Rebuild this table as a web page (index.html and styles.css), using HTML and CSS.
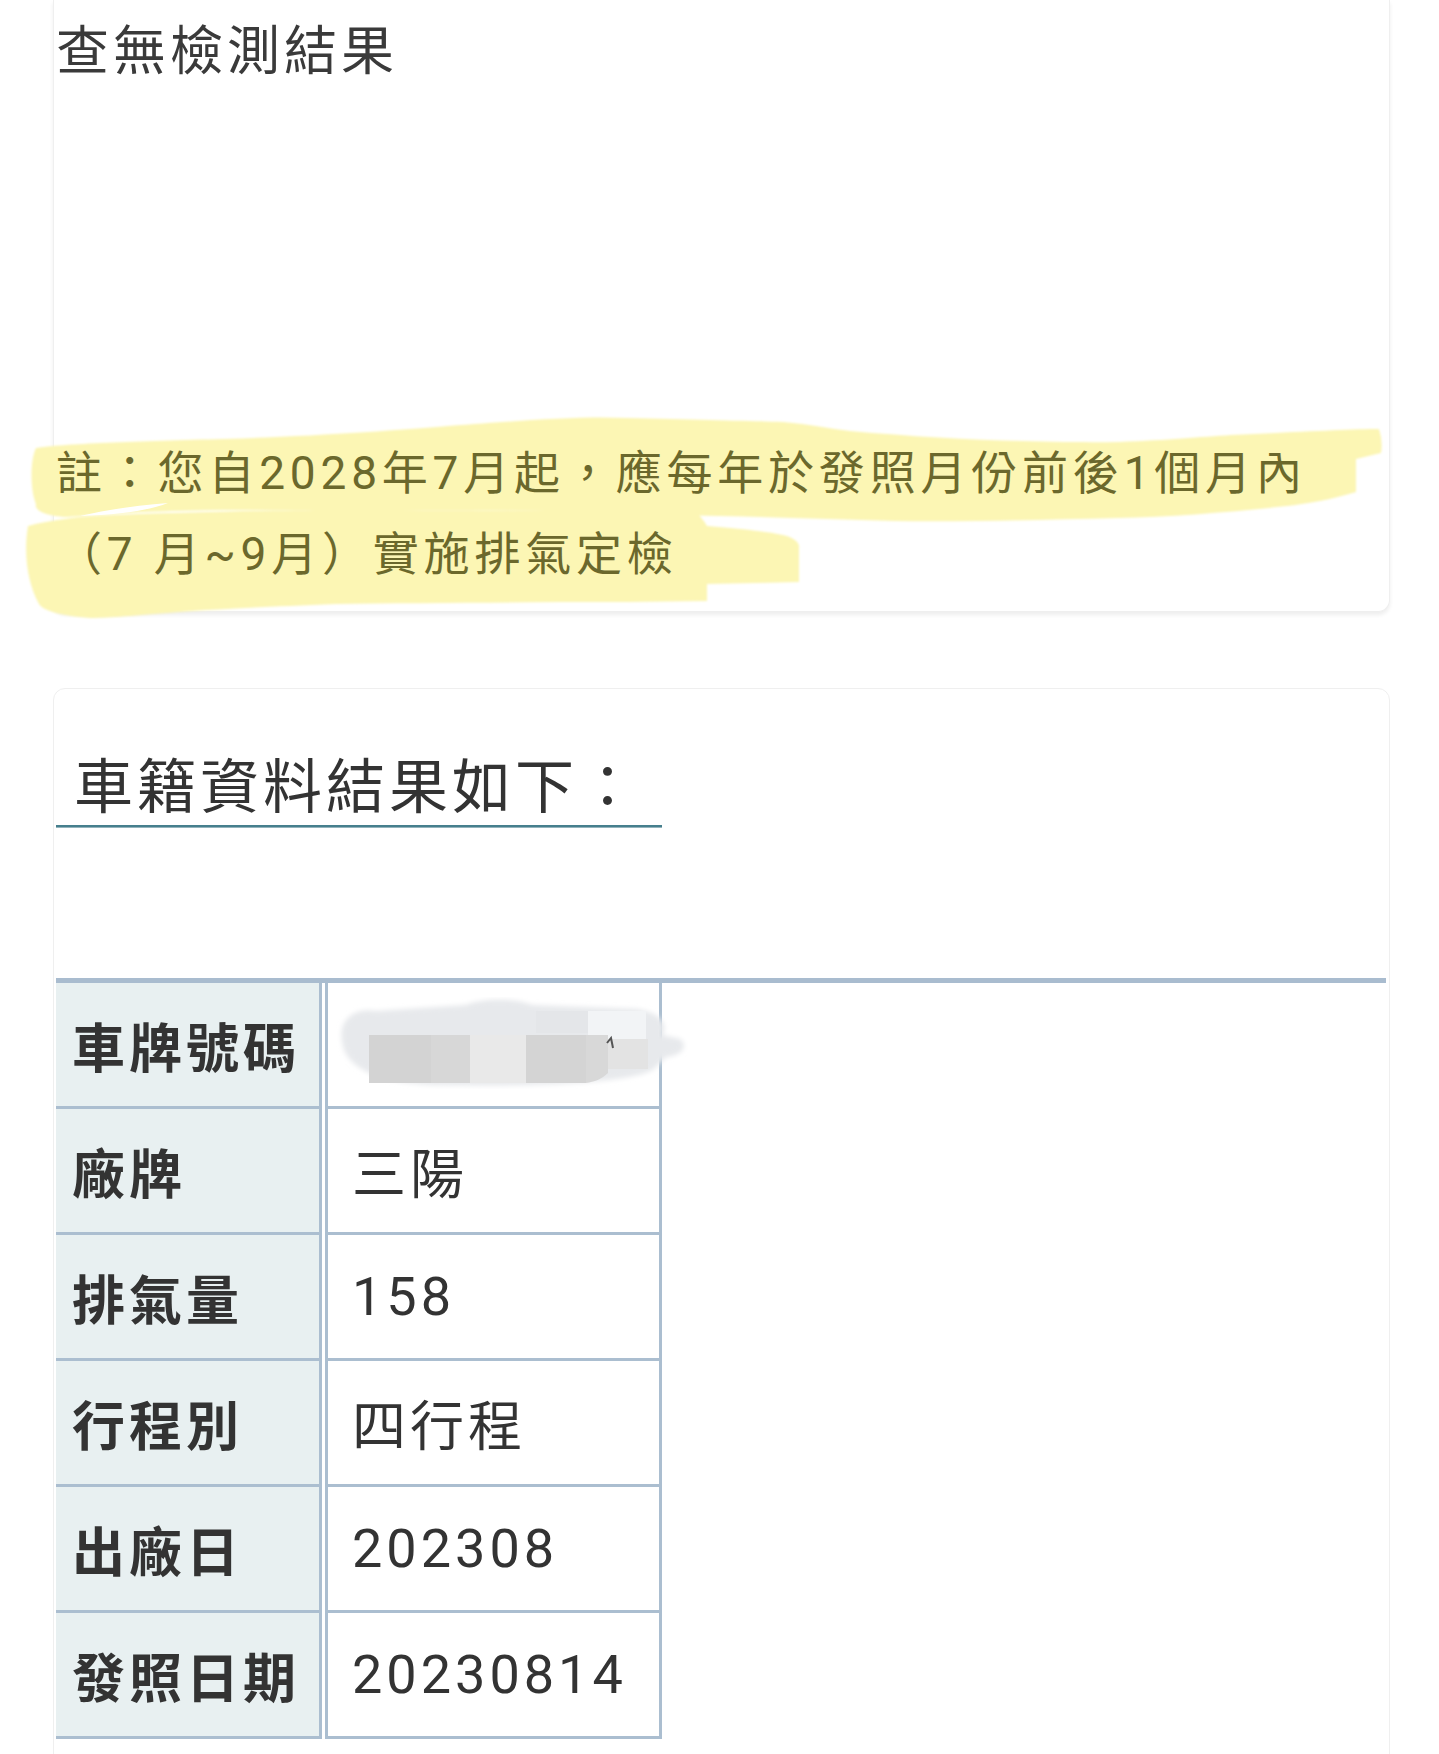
FILE: index.html
```html
<!DOCTYPE html>
<html lang="zh-Hant">
<head>
  <meta charset="UTF-8">
  <meta name="viewport" content="width=device-width, initial-scale=1.0">
  <title>排氣定檢查詢結果</title>
  <link rel="stylesheet" href="styles.css">
</head>
<body>
  <div class="page">

    <section class="card card-result">
      <!-- highlighter stroke drawn over the note -->
      <svg class="marker" width="1400" height="240" viewBox="0 400 1400 240" aria-hidden="true">
        <defs>
          <filter id="soft" x="-5%" y="-20%" width="110%" height="140%">
            <feGaussianBlur stdDeviation="1.2"/>
          </filter>
        </defs>
        <g fill="#fcf6b4" filter="url(#soft)">
          <path d="M36 448 C60 444 140 441 224 439 C320 436 400 430 448 426 C530 420 580 416 627 418 C700 420 760 421 783 422 C810 424 830 429 850 431 C950 440 1050 443 1119 442 C1170 440 1200 437 1231 435 C1300 432 1350 429 1379 429 Q1383 441 1381 453 L1356 459 L1356 492 C1330 500 1305 504 1287 506 C1230 512 1170 517 1119 518 C1040 520 960 522 895 521 C820 519 740 516 671 515 C600 512 520 510 448 510 L224 510 C150 511 100 514 67 517 C45 516 34 510 36 504 C30 490 30 460 36 448 Z"/>
          <path d="M28 526 C50 520 80 516 112 515 C200 512 280 510 336 510 C450 510 600 511 694 511 C700 515 704 521 707 526 C740 529 765 531 783 535 C795 538 800 543 799 548 L799 582 L707 584 L707 601 C650 602 600 602 560 602 C480 603 400 603 336 604 C260 607 200 610 168 613 C130 616 105 618 90 618 C60 616 42 610 39 604 C26 580 24 550 28 526 Z"/>
        </g>
        <path fill="#ffffff" d="M80 516 C110 509 140 505 168 503 C150 510 120 515 80 516 Z"/>
      </svg>

      <p class="empty-msg">查無檢測結果</p>
      <p class="note">註：您自2028年7月起，應每年於發照月份前後1個月內（7 月~9月）實施排氣定檢</p>
    </section>

    <section class="card card-info">
      <h2 class="section-title">車籍資料結果如下：</h2>

      <div class="info-box">
        <table class="info-table">
          <tr>
            <th>車牌號碼</th>
            <td class="plate">
              <!-- redacted plate number -->
              <svg class="plate-blur" width="352" height="92" viewBox="0 0 352 92" aria-hidden="true">
                <defs>
                  <filter id="smudge" x="-10%" y="-20%" width="120%" height="140%">
                    <feGaussianBlur stdDeviation="2.5"/>
                  </filter>
                </defs>
                <path filter="url(#smudge)" fill="#e7e9ec" d="M6 44 C2 22 20 10 40 14 L130 8 C142 2 178 0 196 8 L300 12 C328 16 332 30 326 38 L344 42 C352 48 348 58 330 60 L318 72 C298 86 200 90 100 88 C40 86 8 70 6 44 Z"/>
                <rect x="200" y="14" width="52" height="22" fill="#e4e6e9"/>
                <rect x="252" y="14" width="58" height="28" fill="#f2f4f6"/>
                <rect x="33" y="38" width="62" height="48" fill="#d3d3d3"/>
                <rect x="95" y="38" width="39" height="48" fill="#d7d7d7"/>
                <rect x="134" y="38" width="56" height="48" fill="#e9e9e9"/>
                <rect x="190" y="38" width="60" height="48" fill="#d4d4d4"/>
                <path d="M250 38 H272 V76 C266 82 258 85 250 86 Z" fill="#d8d8d8"/>
                <rect x="272" y="42" width="40" height="30" fill="#e3e3e3"/>
                <path d="M271 46 L275 41 L277 51" fill="none" stroke="#555" stroke-width="2"/>
              </svg>
            </td>
          </tr>
          <tr>
            <th>廠牌</th>
            <td>三陽</td>
          </tr>
          <tr>
            <th>排氣量</th>
            <td>158</td>
          </tr>
          <tr>
            <th>行程別</th>
            <td>四行程</td>
          </tr>
          <tr>
            <th>出廠日</th>
            <td>202308</td>
          </tr>
          <tr>
            <th>發照日期</th>
            <td>20230814</td>
          </tr>
        </table>
      </div>
    </section>

  </div>
</body>
</html>
```

FILE: styles.css
```css
body {
  margin: 0;
  background: #ffffff;
  font-family: Roboto, "Noto Sans CJK TC", sans-serif;
  color: #333333;
}
.page {
  padding: 0 49px 0 53px;
}
.card {
  position: relative;
  background: #ffffff;
  border: 1px solid #efefef;
}
.card-result {
  border-top: none;
  border-radius: 0 0 12px 12px;
  box-shadow: 0 3px 4px rgba(0,0,0,0.07);
  padding: 16px 60px 16px 2px;
  margin-bottom: 76px;
}
.marker {
  position: absolute;
  left: -54px;
  top: 400px;
  z-index: 0;
  pointer-events: none;
}
.empty-msg {
  position: relative;
  z-index: 1;
  margin: 0;
  font-size: 53px;
  line-height: 72px;
  letter-spacing: 4px;
  color: #3a3a3a;
}
.note {
  position: relative;
  z-index: 1;
  margin: 345px 0 0;
  font-size: 46px;
  line-height: 81px;
  letter-spacing: 4.8px;
  color: #6b682c;
}
.card-info {
  border-radius: 12px 12px 0 0;
  padding: 62px 3px 40px 2px;
}
.section-title {
  width: 606px;
  box-sizing: border-box;
  margin: 0 0 151px;
  padding-left: 18px;
  font-size: 59px;
  line-height: 74px;
  font-weight: 400;
  letter-spacing: 4px;
  color: #333333;
  border-bottom: 2px solid #467f8d;
  box-shadow: 0 1px 0 #93b3bb;
}
.info-box {
  border-top: 5px solid #a9bccf;
}
.info-table {
  border-collapse: separate;
  border-spacing: 3px 0;
  margin-left: -3px;
}
.info-table th {
  width: 247px;
  height: 123px;
  padding: 0 0 0 16px;
  background: #e8f0f1;
  border-right: 3px solid #abbed0;
  border-bottom: 3px solid #abbed0;
  text-align: left;
  font-size: 53px;
  font-weight: 700;
  letter-spacing: 4px;
  color: #333333;
}
.info-table td {
  position: relative;
  width: 307px;
  height: 123px;
  padding: 0 0 0 24px;
  border-left: 3px solid #abbed0;
  border-right: 3px solid #abbed0;
  border-bottom: 3px solid #abbed0;
  font-size: 54px;
  letter-spacing: 4px;
  color: #333333;
}
.plate-blur {
  position: absolute;
  left: 8px;
  top: 14px;
}
```
